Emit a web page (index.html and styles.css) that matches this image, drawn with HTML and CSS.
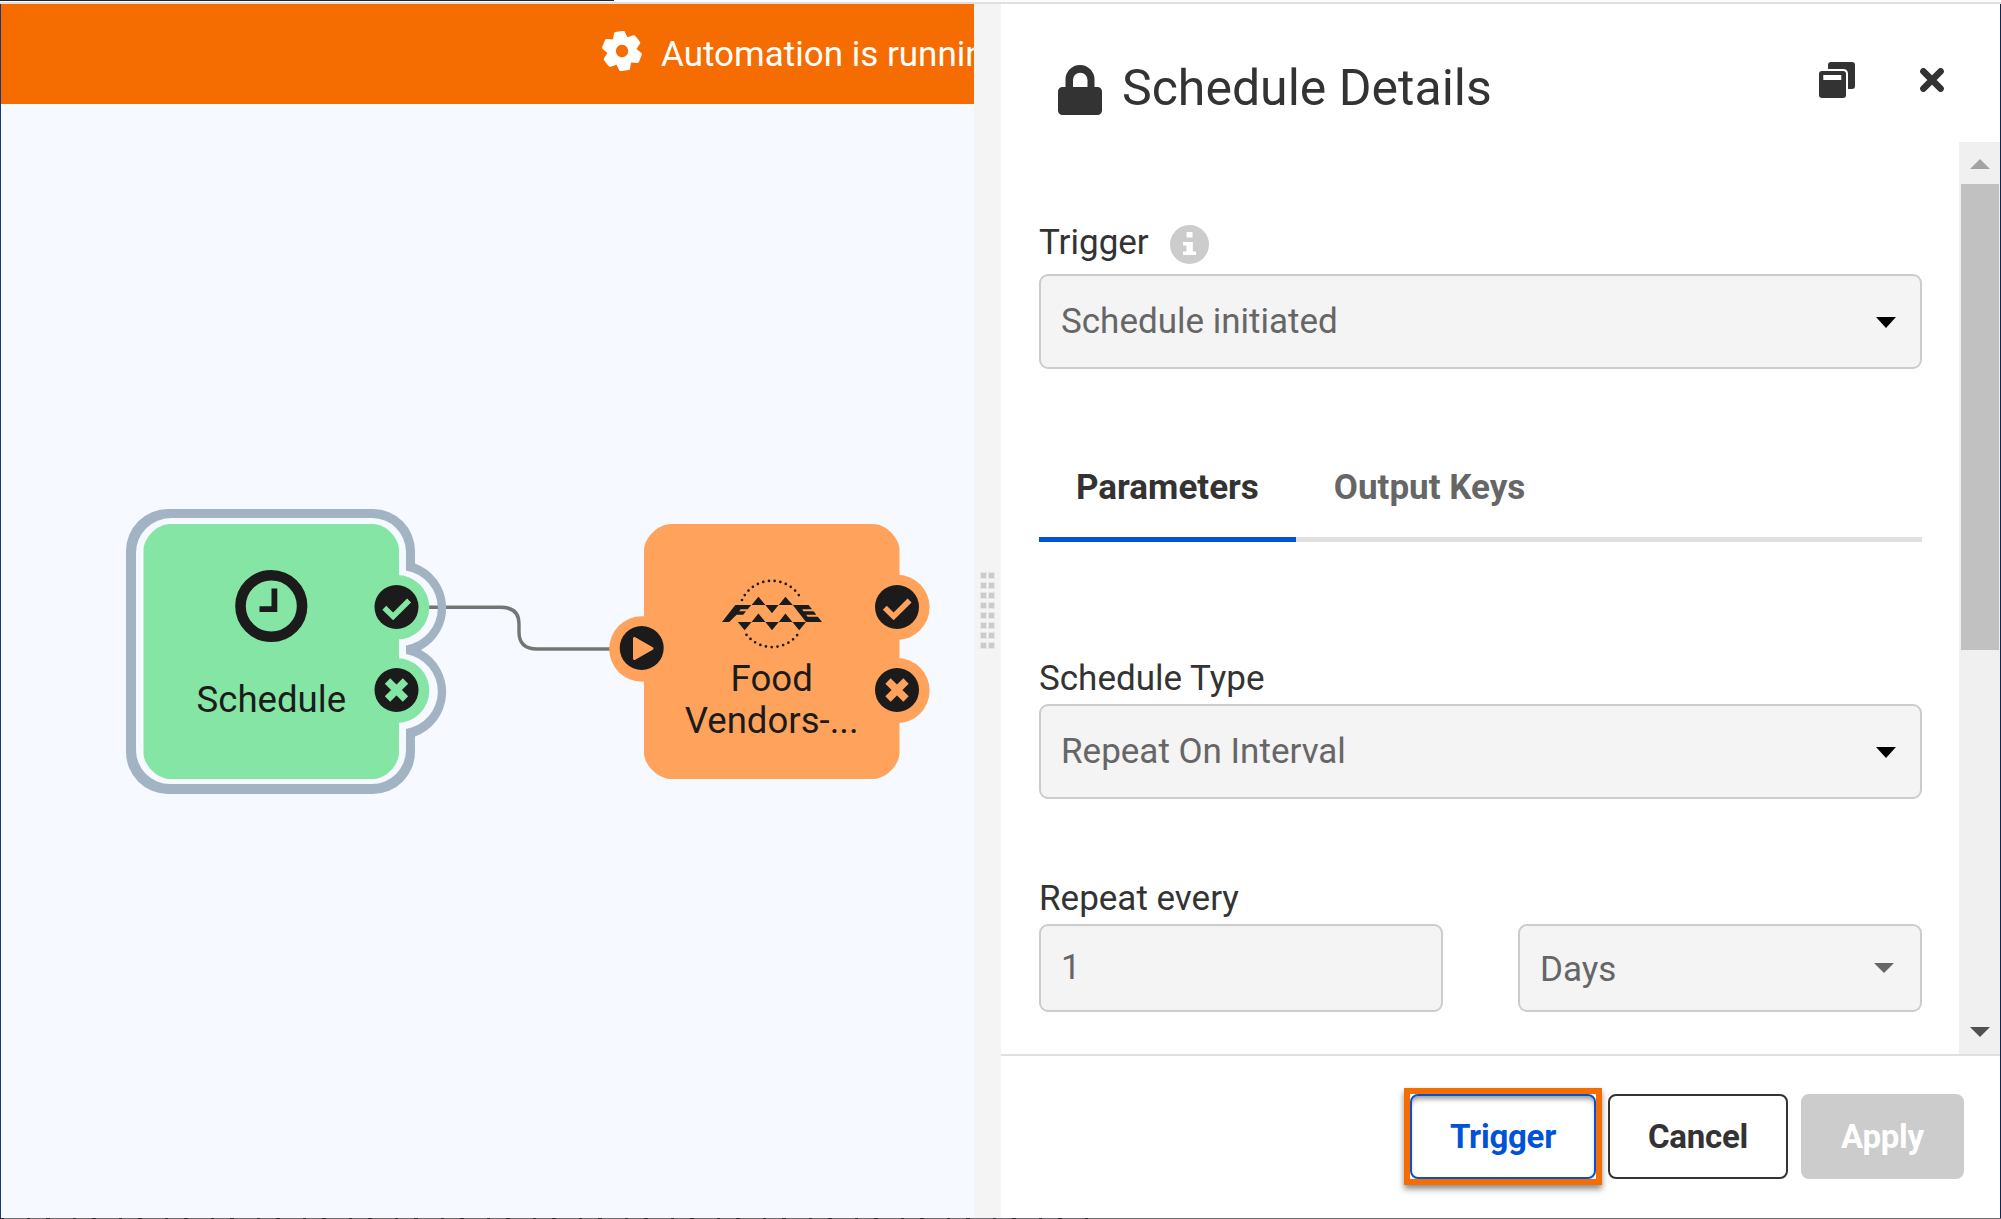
FILE: index.html
```html
<!DOCTYPE html>
<html lang="en">
<head>
<meta charset="utf-8">
<title>Schedule Details</title>
<link rel="stylesheet" href="styles.css">
</head>
<body>
<div class="window">
  <div class="top-edge"></div>
  <main class="workspace">
    <section class="canvas">
      <div class="banner">
        <svg class="gear" viewBox="-20 -20 40 40">
          <defs><path id="tooth" d="M-7.6-12 -5.4-18.6Q-5-19.8-3.8-19.8H3.8Q5-19.8 5.4-18.6L7.6-12Z"/></defs>
          <g fill="#fff" transform="rotate(-8)">
            <path fill-rule="evenodd" d="M0-14.4A14.4 14.4 0 1 1 0 14.4A14.4 14.4 0 1 1 0-14.4ZM0-6.2A6.2 6.2 0 1 0 0 6.2A6.2 6.2 0 1 0 0-6.2Z"/>
            <use href="#tooth"/><use href="#tooth" transform="rotate(60)"/><use href="#tooth" transform="rotate(120)"/>
            <use href="#tooth" transform="rotate(180)"/><use href="#tooth" transform="rotate(240)"/><use href="#tooth" transform="rotate(300)"/>
          </g>
        </svg>
        <span class="banner-text">Automation is running</span>
      </div>
      <svg class="graph" viewBox="1 104 973 1114">
        <defs>
          <g id="port-ok">
            <circle r="22" fill="#1b1b1b"/>
            <path d="M-12.2.8-3.4 9.4 12.6-6.6" fill="none" stroke="currentColor" stroke-width="5.6" stroke-linejoin="miter"/>
          </g>
          <g id="port-fail">
            <circle r="22" fill="#1b1b1b"/>
            <path d="M-9-9 9 9M9-9-9 9" fill="none" stroke="currentColor" stroke-width="7.6"/>
          </g>
        </defs>

        <path class="link" d="M429 607.3H501C513 607.3 519 613 519 624V632C519 643 525 649 537 649H612"/>
        <path class="selection" fill-rule="evenodd" d="M168 509H373A42 42 0 0 1 415 551V563.5A47.5 47.5 0 0 1 421 650A47.5 47.5 0 0 1 415 736.5V752A42 42 0 0 1 373 794H168A42 42 0 0 1 126 752V551A42 42 0 0 1 168 509ZM171 518A35 35 0 0 0 136 553V750A34 34 0 0 0 170 784H372A34 34 0 0 0 406 750V729A38 38 0 0 0 406 654V645.5A38 38 0 0 0 406 570.5V552A34 34 0 0 0 372 518Z"/>

        <g class="node-green">
          <path d="M170 524H373C386 524 399 538 399 550V753C399 765 386 779 373 779H170C157 779 143.5 765 143.5 753V550C143.5 538 157 524 170 524Z"/>
          <circle cx="397" cy="607.3" r="32.3"/><circle cx="397" cy="690.6" r="32.3"/>
          <use href="#port-ok" x="396.5" y="607"/><use href="#port-fail" x="396.5" y="690"/>
        </g>
        <circle cx="271.3" cy="606" r="30.8" fill="none" stroke="#1b1b1b" stroke-width="10.6"/>
        <path d="M274.4 588.5V609.1H259.5" fill="none" stroke="#1b1b1b" stroke-width="5.8"/>
        <text class="node-label" x="271.3" y="712.3">Schedule</text>

        <g class="node-orange">
          <path d="M671 524H873C886 524 899.5 538 899.5 550V753C899.5 765 886 779 873 779H671C658 779 644 765 644 753V550C644 538 658 524 671 524Z"/>
          <circle cx="897" cy="607.3" r="32.6"/><circle cx="897" cy="690.6" r="32.6"/><circle cx="642" cy="649" r="32.8"/>
          <use href="#port-ok" x="897" y="607"/><use href="#port-fail" x="897" y="690"/>
          <circle cx="641.7" cy="648" r="22" fill="#1b1b1b"/>
          <path d="M634.5 638.5V658.5L652 648.5Z" stroke="currentColor" stroke-width="3" stroke-linejoin="round"/>
        </g>
        <g fill="#1b1b1b">
          <path d="M751.6 605 758.4 596.7 765.4 605ZM778.8 605 785.4 596.7 792.8 605ZM765.4 605H778.6L772 613.3Z"/>
          <path d="M751.6 622 758.4 613.5 765.4 622ZM778.8 622 785.4 613.5 792.4 622Z"/>
          <path d="M737.8 622H751.6L744.6 630.3ZM765.4 622H778.8L772 630.3ZM792.4 622H806L799.2 630.3Z"/>
          <path d="M735.3 605H751.2L747.7 609.3H740.6L739.2 611.2H746L743.2 614.8H736.6L729.2 622H722Z"/>
          <path d="M792.8 605H808.6L812 609.3H802.2L803.4 611.2H813.6L816.4 614.8H806.2L807.6 616.8H817.8L822 622H806Z"/>
        </g>
        <g fill="none" stroke="#1b1b1b" stroke-width="2.7" stroke-linecap="round">
          <path d="M742 600A32.7 32.7 0 0 1 801.6 600" stroke-dasharray="0 5.75"/>
          <path d="M746.5 634.8A32.7 32.7 0 0 0 797.5 634.8" stroke-dasharray="0 5.78"/>
        </g>
        <text class="node-label" x="771.7" y="691.3">Food</text>
        <text class="node-label" x="771.7" y="733.3">Vendors-...</text>
      </svg>
    </section>

    <div class="splitter">
      <div class="grip"><i></i><i></i><i></i><i></i><i></i><i></i><i></i><i></i><i></i><i></i><i></i><i></i><i></i><i></i><i></i><i></i></div>
    </div>

    <aside class="panel">
      <header class="panel-head">
        <svg class="lock" viewBox="0 0 44 50"><path fill-rule="evenodd" d="M7.5 22V14.5A14.5 14.5 0 0 1 36.5 14.5V22H39.5A4.5 4.5 0 0 1 44 26.5V45.5A4.5 4.5 0 0 1 39.5 50H4.5A4.5 4.5 0 0 1 0 45.5V26.5A4.5 4.5 0 0 1 4.5 22ZM15 22H29.5V15A7.25 7.25 0 0 0 15 15Z"/></svg>
        <h1 class="title">Schedule Details</h1>
        <svg class="copy" viewBox="0 0 36 36">
          <path d="M9 7V3Q9 0 12 0H33Q36 0 36 3V24Q36 27 33 27H29V12Q29 7 24 7Z"/>
          <path fill-rule="evenodd" d="M3 9H24Q27 9 27 12V33Q27 36 24 36H3Q0 36 0 33V12Q0 9 3 9ZM4.3 13V18H22.3V13Z"/>
        </svg>
        <svg class="close" viewBox="0 0 24 24"><path d="M3.4 3.4 20.6 20.6M20.6 3.4 3.4 20.6"/></svg>
      </header>

      <div class="panel-body">
        <form class="form">
          <div class="label trigger-label">Trigger
            <svg class="info" viewBox="0 0 39 39"><circle cx="19.5" cy="19.5" r="19.5" fill="#ccc"/><path fill="#fff" d="M16.5 7H22.5V12.5H16.5ZM13 17H22.8V26.5H26V30H13V26.5H16.4V20.5H13Z"/></svg>
          </div>
          <div class="field"><span>Schedule initiated</span><b class="caret dark"></b></div>
          <nav class="tabs"><a class="tab active">Parameters</a><a class="tab">Output Keys</a></nav>
          <div class="label type-label">Schedule Type</div>
          <div class="field"><span>Repeat On Interval</span><b class="caret dark"></b></div>
          <div class="label every-label">Repeat every</div>
          <div class="pair">
            <div class="field small"><span>1</span></div>
            <div class="field small days"><span>Days</span><b class="caret"></b></div>
          </div>
        </form>
        <div class="scrollbar"><b class="arrow up"></b><div class="thumb"></div><b class="arrow down"></b></div>
      </div>

      <footer class="actions">
        <div class="highlight"><button class="btn primary">Trigger</button></div>
        <button class="btn cancel">Cancel</button>
        <button class="btn apply">Apply</button>
      </footer>
    </aside>
  </main>
  <div class="bottom-edge"></div>
</div>
</body>
</html>
```

FILE: styles.css
```css
* { box-sizing: border-box; }
body { margin: 0; font-family: Roboto, "Liberation Sans", sans-serif; color: #333; }
.window { width: 2001px; height: 1219px; display: flex; flex-direction: column; overflow: hidden; background: #fff; }
.top-edge { height: 4px; flex: none; border-bottom: 2px solid #e0e0e0; background: linear-gradient(#26242b, #26242b) 0 0 / 614px 1px no-repeat #fcfcfc; }
.workspace { flex: 1; min-height: 0; display: flex; border-left: 1px solid #14387f; border-right: 1px solid #0f2757; }
.bottom-edge { height: 1px; flex: none; background: repeating-linear-gradient(90deg, #2b2830 0 4px, #6f6c70 4px 27px, #2b2830 27px 30px, #6f6c70 30px 46px) 0 0 / 1096px 1px no-repeat #6c6c6c; }

.canvas { width: 973px; flex: none; background: #f6f9ff; overflow: hidden; }
.banner { height: 100px; padding-left: 601px; display: flex; align-items: flex-start; background: #f56c00; color: #fff; }
.gear { width: 40px; height: 40px; flex: none; margin-top: 27px; }
.banner-text { margin: 31px 0 0 19px; font-size: 35px; line-height: 40px; white-space: nowrap; }
.graph { display: block; width: 973px; height: 1114px; }
.link { fill: none; stroke: #757575; stroke-width: 3.4px; }
.selection { fill: #a2b4c4; }
.node-green { fill: #85e5a4; color: #85e5a4; }
.node-orange { fill: #ffa35c; color: #ffa35c; }
.node-label { font-size: 36.6px; text-anchor: middle; fill: #1b1b1b; }

.splitter { width: 27px; flex: none; padding: 569px 0 0 7px; background: #f4f4f4; }
.grip { display: grid; grid-template-columns: 5px 5px; column-gap: 3px; row-gap: 5px; }
.grip i { height: 5px; background: #cbcbcb; box-shadow: 0 0 0 1px #e6e6e6; }

.panel { flex: 1; min-width: 0; display: flex; flex-direction: column; }
.panel-head { height: 138px; flex: none; display: flex; align-items: flex-start; padding: 0 56px 0 57px; }
.lock { width: 44px; height: 50px; margin-top: 61px; fill: #333; }
.title { margin: 54px 0 0 20px; font-size: 50px; line-height: 60px; font-weight: 400; }
.copy { width: 36px; height: 36px; margin: 58px 65px 0 auto; fill: #333; }
.close { width: 24px; height: 24px; margin-top: 64px; fill: none; stroke: #333; stroke-width: 6.5px; stroke-linecap: round; }

.panel-body { flex: 1; min-height: 0; display: flex; }
.form { flex: 1; padding: 81px 37px 0 38px; }
.label { height: 40px; font-size: 35px; line-height: 40px; }
.trigger-label { display: flex; gap: 21px; margin-bottom: 11px; }
.info { width: 39px; height: 39px; margin-top: 2px; }
.field { height: 95px; padding: 0 24px 0 20px; display: flex; align-items: center; justify-content: space-between; border: 2px solid #ccc; border-radius: 9px; background: #f4f4f4; color: #666; font-size: 35px; line-height: 40px; }
.caret { border: 10px solid transparent; border-top-color: #666; border-bottom: 0; }
.caret.dark { margin-top: 2px; border-width: 11px 10.5px 0; border-top-color: #000; }
.tabs { height: 103px; margin-top: 70px; display: flex; border-bottom: 5px solid #e0e0e0; font-size: 35px; line-height: 97px; font-weight: 700; color: #666; }
.tab { padding: 0 38px; height: 103px; }
.tab.active { padding: 0 37px; color: #333; border-bottom: 5px solid #0052d6; }
.type-label { margin: 117px 0 5px; }
.every-label { margin: 80px 0 5px; }
.pair { display: grid; grid-template-columns: 404px 404px; justify-content: space-between; }
.field.small { height: 88px; }
.days { padding-right: 26px; }
.field.days span { padding-top: 4px; }

.scrollbar { width: 41px; flex: none; display: flex; flex-direction: column; align-items: center; background: #f0f0f0; }
.arrow { border: 10px solid transparent; }
.arrow.up { margin: 17px 0 15px; border-top: 0; border-bottom-color: #a3a3a3; }
.thumb { width: 38px; height: 466px; background: #c1c1c1; }
.arrow.down { margin: auto 0 17px; border-bottom: 0; border-top-color: #505050; }

.actions { height: 164px; flex: none; display: flex; align-items: flex-start; justify-content: flex-end; padding: 32px 36px 0 0; border-top: 2px solid #e0e0e0; }
.highlight { border: 6px solid #f56c00; box-shadow: 0 4px 6px rgba(0, 0, 0, .45); }
.btn { display: block; height: 85px; margin: 0; padding: 0; border: 2px solid #333; border-radius: 8px; background: #fff; color: #333; font: 700 33px/40px Roboto, "Liberation Sans", sans-serif; letter-spacing: -.25px; }
.primary { width: 186px; border-color: #0052d6; color: #0052d6; box-shadow: inset 0 5px 5px -2px rgba(0, 0, 0, .4); }
.cancel { width: 180px; margin: 6px 13px 0 6px; }
.apply { width: 163px; margin-top: 6px; border-color: #ccc; background: #ccc; color: #fff; }
```
